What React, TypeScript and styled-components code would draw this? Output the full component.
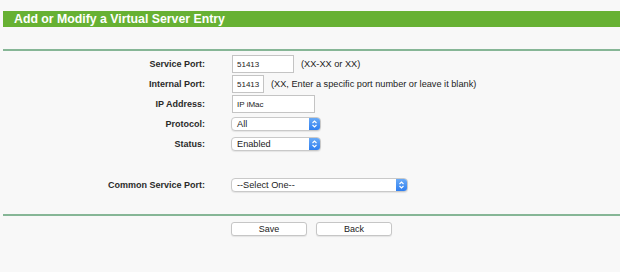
import { createGlobalStyle, styled } from 'styled-components';

const GlobalStyle = createGlobalStyle`
  html, body {
    margin: 0;
    padding: 0;
    background: #f8f8f8;
  }
  body {
    font-family: 'Liberation Sans', Arial, sans-serif;
    font-size: 9.2px;
    color: #222;
  }
`;

const Page = styled.div`
  width: 620px;
  height: 272px;
  padding: 11px 0 0 3px;
  box-sizing: border-box;
  overflow: hidden;
`;

const TitleBar = styled.div`
  height: 16px;
  background: #67b133;
  color: #fff;
  font-weight: bold;
  font-size: 12.3px;
  line-height: 16px;
  padding-left: 11px;
`;

const Divider = styled.div<{ $top: number }>`
  margin-top: ${(p) => p.$top}px;
  height: 2px;
  background: #86b696;
`;

const Form = styled.div`
  display: grid;
  grid-template-columns: 202px 1fr;
  grid-template-rows: repeat(5, 20px) 21px 20px;
  column-gap: 27px;
  align-items: center;
  margin-top: 3px;
`;

const Label = styled.div`
  text-align: right;
  font-weight: bold;
  font-size: 9px;
  color: #2a2a2a;
`;

const Field = styled.div`
  display: flex;
  align-items: center;
`;

const TextInput = styled.input<{ $w: number }>`
  width: ${(p) => p.$w}px;
  height: 18px;
  box-sizing: border-box;
  border: 1px solid #c4c4c4;
  background: #fff;
  padding: 0 3px 0 4px;
  font-family: inherit;
  font-size: 8px;
  color: #222;
  outline: none;
`;

const Hint = styled.span`
  margin-left: 7px;
  color: #222;
`;

const SelectBox = styled.div<{ $w: number }>`
  width: ${(p) => p.$w}px;
  height: 14px;
  margin-left: -1px;
  box-sizing: border-box;
  display: flex;
  align-items: center;
  justify-content: space-between;
  border: 1px solid #c9c9c9;
  border-radius: 4px;
  background: #fff;
  box-shadow: 0 1px 1px rgba(0, 0, 0, 0.08);
  overflow: hidden;
`;

const SelectText = styled.span`
  padding-left: 5px;
  color: #222;
`;

const Stepper = styled.span`
  width: 11px;
  height: 100%;
  display: flex;
  align-items: center;
  justify-content: center;
  background: linear-gradient(#6aaaf6, #2f7ff0);
`;

const Spacer = styled.div``;

const Buttons = styled.div`
  display: flex;
  justify-content: center;
  gap: 9px;
  margin-top: 6px;
`;

const Button = styled.button`
  width: 76px;
  height: 14px;
  padding: 0;
  box-sizing: border-box;
  border: 1px solid #c6c6c6;
  border-radius: 3px;
  background: #fff;
  box-shadow: 0 1px 1px rgba(0, 0, 0, 0.08);
  font-family: inherit;
  font-size: 9px;
  line-height: 12px;
  color: #222;
`;

function Select({ value, width }: { value: string; width: number }) {
  return (
    <SelectBox $w={width}>
      <SelectText>{value}</SelectText>
      <Stepper>
        <svg width="7" height="10" viewBox="0 0 7 10">
          <path
            d="M1.5 4 L3.5 2 L5.5 4 M1.5 6 L3.5 8 L5.5 6"
            fill="none"
            stroke="#fff"
            strokeWidth="1.1"
          />
        </svg>
      </Stepper>
    </SelectBox>
  );
}

export default function App() {
  return (
    <>
      <GlobalStyle />
      <Page>
        <TitleBar>Add or Modify a Virtual Server Entry</TitleBar>
        <Divider $top={22} />
        <Form>
          <Label>Service Port:</Label>
          <Field>
            <TextInput $w={62} value="51413" readOnly />
            <Hint>(XX-XX or XX)</Hint>
          </Field>
          <Label>Internal Port:</Label>
          <Field>
            <TextInput $w={32} value="51413" readOnly />
            <Hint>(XX, Enter a specific port number or leave it blank)</Hint>
          </Field>
          <Label>IP Address:</Label>
          <Field>
            <TextInput $w={83} value="IP iMac" readOnly />
          </Field>
          <Label>Protocol:</Label>
          <Field>
            <Select value="All" width={90} />
          </Field>
          <Label>Status:</Label>
          <Field>
            <Select value="Enabled" width={90} />
          </Field>
          <Spacer />
          <Spacer />
          <Label>Common Service Port:</Label>
          <Field>
            <Select value="--Select One--" width={177} />
          </Field>
        </Form>
        <Divider $top={19} />
        <Buttons>
          <Button>Save</Button>
          <Button>Back</Button>
        </Buttons>
      </Page>
    </>
  );
}
